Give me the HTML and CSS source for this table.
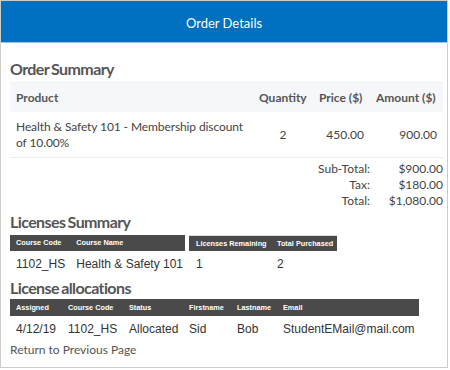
FILE: index.html
```html
<!DOCTYPE html>
<html lang="en">
<head>
    <meta charset="UTF-8">
    <meta name="viewport" content="width=device-width, initial-scale=1.0">
    <title>Order Details</title>
    <link rel="stylesheet" href="styles.css">
</head>
<body>
    <div class="panel">
        <div class="panel-header">Order Details</div>

        <div class="panel-body">
            <h2>Order Summary</h2>
            <table class="order-table">
                <thead>
                    <tr>
                        <th class="col-product">Product</th>
                        <th class="col-qty">Quantity</th>
                        <th class="col-price">Price ($)</th>
                        <th class="col-amount">Amount ($)</th>
                    </tr>
                </thead>
                <tbody>
                    <tr>
                        <td>Health &amp; Safety 101 - Membership discount of 10.00%</td>
                        <td class="center">2</td>
                        <td class="right">450.00</td>
                        <td class="right">900.00</td>
                    </tr>
                </tbody>
            </table>

            <div class="totals">
                <div class="total-row"><span class="total-label">Sub-Total:</span><span class="total-value">$900.00</span></div>
                <div class="total-row"><span class="total-label">Tax:</span><span class="total-value">$180.00</span></div>
                <div class="total-row"><span class="total-label">Total:</span><span class="total-value">$1,080.00</span></div>
            </div>

            <h2>Licenses Summary</h2>
            <div class="licenses">
                <table class="grid lic-course">
                    <tr>
                        <th class="w-code">Course Code</th>
                        <th>Course Name</th>
                    </tr>
                    <tr>
                        <td>1102_HS</td>
                        <td>Health &amp; Safety 101</td>
                    </tr>
                </table>
                <table class="grid lic-count">
                    <tr>
                        <th class="w-remaining">Licenses Remaining</th>
                        <th>Total Purchased</th>
                    </tr>
                    <tr>
                        <td>1</td>
                        <td>2</td>
                    </tr>
                </table>
            </div>

            <h2 class="alloc-title">License allocations</h2>
            <table class="grid allocations">
                <tr>
                    <th class="w-assigned">Assigned</th>
                    <th class="w-course">Course Code</th>
                    <th class="w-status">Status</th>
                    <th class="w-first">Firstname</th>
                    <th class="w-last">Lastname</th>
                    <th>Email</th>
                </tr>
                <tr>
                    <td>4/12/19</td>
                    <td>1102_HS</td>
                    <td>Allocated</td>
                    <td>Sid</td>
                    <td>Bob</td>
                    <td>StudentEMail@mail.com</td>
                </tr>
            </table>

            <a href="#" class="back-link">Return to Previous Page</a>
        </div>
    </div>
</body>
</html>
```

FILE: styles.css
```css
* {
    box-sizing: border-box;
}

body {
    margin: 0;
    padding: 0;
    background-color: #fff;
    font-family: 'Lato', sans-serif;
    color: #444;
}

.panel {
    width: 448px;
    height: 368px;
    border: 1px solid #ccc;
    background-color: #fff;
}

.panel-header {
    height: 42px;
    line-height: 44px;
    background-color: #0070c0;
    color: #fff;
    text-align: center;
    font-size: 13px;
    border-bottom: 1px solid #9cc5e6;
}

.panel-body {
    padding: 0 4px 0 9px;
}

h2 {
    margin: 0;
    font-size: 16px;
    font-weight: bold;
    color: #555;
    letter-spacing: -0.6px;
    word-spacing: -1px;
}

.panel-body > h2:first-child {
    margin-top: 16px;
}

/* order summary */
.order-table {
    width: 100%;
    margin-top: 4px;
    border-collapse: collapse;
    table-layout: fixed;
    font-size: 12px;
}

.order-table th {
    background-color: #f5f7fa;
    border-top: 1px solid #eef0f3;
    color: #555;
    font-size: 12px;
    text-align: left;
    height: 29px;
    padding: 0 6px;
    white-space: nowrap;
}

.order-table td {
    padding: 7px 6px 6px;
    line-height: 16px;
    color: #444;
    border-bottom: 1px solid #eee;
}

.order-table td:first-child {
    padding-right: 0;
    letter-spacing: -0.1px;
}

.order-table .col-qty {
    width: 60px;
}

.order-table .col-price {
    width: 57px;
}

.order-table .col-amount {
    width: 73px;
}

.center {
    text-align: center;
}

.right {
    text-align: right;
}

.totals {
    margin-top: 3px;
    font-size: 12px;
    color: #444;
}

.total-row {
    display: flex;
    justify-content: flex-end;
    line-height: 16px;
}

.total-label {
    text-align: right;
}

.total-value {
    width: 73px;
    text-align: right;
}

.totals + h2 {
    margin-top: 3px;
}

/* dark header grids */
.grid {
    border-collapse: collapse;
    font-family: 'Liberation Sans', Arial, sans-serif;
}

.grid th {
    background-color: #4a4a4a;
    color: #fff;
    font-size: 7.3px;
    font-weight: bold;
    text-align: left;
    height: 16px;
    padding: 0 2px 0 6px;
    white-space: nowrap;
}

.grid td {
    font-size: 12px;
    color: #333;
    padding: 0 2px 0 6px;
    height: 26px;
    white-space: nowrap;
}

.licenses {
    display: flex;
    gap: 4px;
    margin-top: 4px;
}

.lic-course {
    width: 175px;
}

.lic-course .w-code {
    width: 61px;
}

.lic-count {
    width: 148px;
}

.lic-count th {
    border-top: 1px solid #ddd;
    padding-left: 7px;
}

.lic-count td {
    padding-left: 7px;
}

.lic-count .w-remaining {
    width: 81px;
}

.alloc-title {
    margin-top: 1px;
}

.allocations {
    width: 409px;
    margin-top: 2px;
}

.allocations th {
    height: 17px;
}

.allocations .w-assigned {
    width: 52px;
}

.allocations .w-course {
    width: 61px;
}

.allocations .w-status {
    width: 60px;
}

.allocations .w-first {
    width: 48px;
}

.allocations .w-last {
    width: 46px;
}

.back-link {
    display: block;
    font-size: 12px;
    color: #555;
    text-decoration: none;
    margin-top: 0;
}
```
